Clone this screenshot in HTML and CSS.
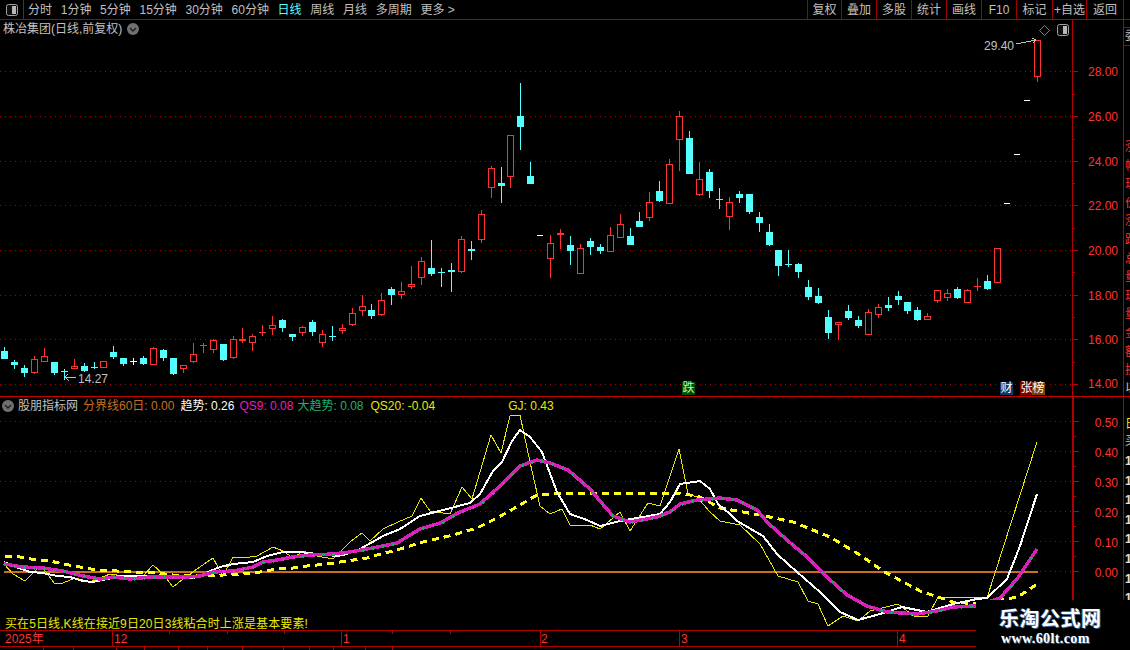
FILE: index.html
```html
<!DOCTYPE html>
<html lang="zh-CN">
<head>
<meta charset="utf-8">
<title>株冶集团 日线</title>
<link rel="stylesheet" href="styles.css">
</head>
<body>
<div class="app">
  <header class="toolbar">
    <div class="layout-cell">
      <svg class="panel-icon" viewBox="0 0 12 12"><rect x="0.5" y="0.5" width="11" height="11" rx="2" class="pi-frame"/><rect x="6" y="2" width="4" height="8" class="pi-fill"/></svg>
    </div>
    <nav class="periods">
      <span>分时</span><span>1分钟</span><span>5分钟</span><span>15分钟</span><span>30分钟</span><span>60分钟</span>
      <span class="active">日线</span><span>周线</span><span>月线</span><span>多周期</span><span>更多 &gt;</span>
    </nav>
    <div class="actions">
      <span class="btn narrow">复权</span><span class="btn">叠加</span><span class="btn">多股</span><span class="btn">统计</span><span class="btn">画线</span><span class="btn">F10</span><span class="btn wide">标记</span><span class="btn narrow">+自选</span><span class="btn widest">返回</span>
    </div>
  </header>

  <section class="pane price">
    <div class="plot">
      <svg class="chart" viewBox="0 20 1072 376" width="1072" height="376">
        <path id="price-grid" class="grid"/>
        <g id="candles"></g>
        <text x="78" y="383" class="note">14.27</text>
        <path d="M76 377H65M65 377l3-3M65 377l4 4" class="note-line"/>
        <text x="984" y="50" class="note">29.40</text>
        <path d="M1016 44l20-4M1036 40l-4-2M1036 40l-3 3" class="note-line"/>
      </svg>
      <div class="title">
        <span>株冶集团(日线,前复权)</span>
        <svg class="chev" viewBox="0 0 12 12"><circle cx="6" cy="6" r="6" class="chev-bg"/><path d="M3 5l3 3 3-3" class="chev-mark"/></svg>
      </div>
      <div class="corner-tools">
        <svg class="diamond" viewBox="0 0 11 11"><path d="M5.5 0.5l5 5-5 5-5-5z" class="diamond-line"/></svg>
        <svg class="panel-icon" viewBox="0 0 12 12"><rect x="0.5" y="0.5" width="11" height="11" rx="2" class="pi-frame"/><rect x="6" y="2" width="4" height="8" class="pi-fill"/></svg>
      </div>
      <span class="mark mark-die">跌</span>
      <span class="mark mark-cai">财</span>
      <span class="mark mark-zhang">张</span>
      <span class="mark mark-bang">榜</span>
    </div>
    <svg class="axis" viewBox="1073 20 50 376" width="50" height="376">
      <path class="tick" d="M1073 71.5h5M1073 116.5h5M1073 161.5h5M1073 205.5h5M1073 250.5h5M1073 295.5h5M1073 339.5h5M1073 384.5h5M1073 94.5h2M1073 139.5h2M1073 183.5h2M1073 228.5h2M1073 272.5h2M1073 317.5h2M1073 362.5h2"/>
      <text x="1118" y="76">28.00</text><text x="1118" y="121">26.00</text><text x="1118" y="166">24.00</text><text x="1118" y="210">22.00</text><text x="1118" y="255">20.00</text><text x="1118" y="300">18.00</text><text x="1118" y="344">16.00</text><text x="1118" y="388">14.00</text>
    </svg>
    <div class="strip">
      <span class="frag boxed">委</span>
      <span class="frag reds">涨<br>幅<br>现<br>价<br>涨<br>跌<br>总<br>量<br>现<br>量<br>金<br>额<br>换</span>
      <span class="frag tail">以</span>
    </div>
  </section>

  <section class="pane indicator">
    <div class="plot">
      <svg class="chart" viewBox="0 398 1072 232" width="1072" height="232">
        <path id="ind-grid" class="grid"/>
        <line x1="4" y1="572.5" x2="1038" y2="572.5" class="zero"/>
        <polyline id="gj" class="ln-thin"/>
        <polyline id="qs20" class="ln-dash"/>
        <polyline id="trend" class="ln-white"/>
        <polyline id="qs9" class="ln-mag"/>
        <g id="qs9-marks"></g>
      </svg>
      <div class="legend">
        <svg class="chev" viewBox="0 0 12 12"><circle cx="6" cy="6" r="6" class="chev-bg"/><path d="M3 5l3 3 3-3" class="chev-mark"/></svg>
        <span class="lg-name">股朋指标网</span>
        <span class="lg-orange">分界线60日: 0.00</span>
        <span class="lg-white">趋势: 0.26</span>
        <span class="lg-mag">QS9: 0.08</span>
        <span class="lg-green">大趋势: 0.08</span>
        <span class="lg-yellow lg-qs20">QS20: -0.04</span>
        <span class="lg-yellow lg-gj">GJ: 0.43</span>
      </div>
      <p class="tip">买在5日线,K线在接近9日20日3线粘合时上涨是基本要素!</p>
    </div>
    <svg class="axis axis-strong" viewBox="1074 398 49 232" width="49" height="232">
      <path class="tick" d="M1074 422.5h5M1074 452.5h5M1074 482.5h5M1074 512.5h5M1074 542.5h5M1074 572.5h5M1074 437.5h2M1074 467.5h2M1074 497.5h2M1074 527.5h2M1074 557.5h2"/>
      <text x="1118" y="428">0.50</text><text x="1118" y="458">0.40</text><text x="1118" y="488">0.30</text><text x="1118" y="518">0.20</text><text x="1118" y="548">0.10</text><text x="1118" y="578">0.00</text>
    </svg>
    <div class="strip">
      <span class="frag box-yellow">日</span>
      <span class="frag tail">买</span>
      <span class="frag digits">1<br>1<br>1<br>1<br>1<br>1<br>1<br>1</span>
    </div>
  </section>

  <footer class="timebar">
    <svg class="dates" viewBox="0 630 1130 20" width="1130" height="20">
      <path class="time-line" d="M0 630.5H1123M0 646.5H1123M112.5 631v15M341.5 631v15M540.5 631v15M679.5 631v15M897.5 631v15M169.5 631v3M227.5 631v3M284.5 631v3M392.5 631v3M450.5 631v3M43.5 647v3M73.5 647v3M116.5 647v3M144.5 647v3M178.5 647v3M207.5 647v3M242.5 647v3M283.5 647v3M309.5 647v3M333.5 647v3M365.5 647v3M392.5 647v3"/>
      <text x="5" y="643">2025年</text><text x="114" y="643">12</text><text x="343" y="643">1</text><text x="541" y="643">2</text><text x="681" y="643">3</text><text x="899" y="643">4</text>
    </svg>
  </footer>

  <aside class="watermark">
    <div class="wm-cn">乐淘公式网</div>
    <div class="wm-url">www.60lt.com</div>
  </aside>
</div>
<script src="script.js"></script>
</body>
</html>
```

FILE: styles.css
```css
* { box-sizing: border-box; }
html, body { margin: 0; padding: 0; background: #000; }
body { font: 12px/1 "Liberation Sans", "Noto Sans CJK SC", sans-serif; color: #c0c0c0; }
.app { position: relative; width: 1130px; height: 650px; overflow: hidden; background: #000; display: flex; flex-direction: column; }

/* toolbar */
.toolbar { display: flex; height: 20px; flex: none; border-bottom: 1px solid #b00000; align-items: stretch; }
.layout-cell { width: 24px; border-right: 1px solid #c00000; display: flex; align-items: center; justify-content: center; padding-right: 0; }
.panel-icon { width: 12px; height: 12px; display: block; }
.pi-frame { fill: #101010; stroke: #a0a0a0; }
.pi-fill { fill: #b8b8b8; }
.periods { display: flex; align-items: center; gap: 8.7px; padding-left: 4px; white-space: nowrap; }
.periods .active { color: #54ffff; }
.actions { display: flex; margin-left: auto; margin-right: 6px; border-right: 1px solid #a00000; }
.btn { width: 35px; border-left: 1px solid #a00000; display: flex; align-items: center; justify-content: center; white-space: nowrap; }
.btn.narrow { width: 34px; }
.btn.wide { width: 36px; }
.btn.widest { width: 37px; }

/* panes */
.pane { display: flex; flex: none; }
.price { height: 377px; border-bottom: 1px solid #c80000; }
.indicator { height: 233px; border-bottom: 0; }
.plot { position: relative; width: 1072px; flex: none; }
.chart { display: block; shape-rendering: crispEdges; }
.axis { display: block; flex: none; border-left: 1px solid #b00000; width: 51px; box-sizing: border-box; }
.axis-strong { border-left: 2px solid #b00000; }
.axis text, .dates text { fill: #ff3232; font-size: 12px; }
.axis text { text-anchor: end; }
.tick { stroke: #c00000; fill: none; shape-rendering: crispEdges; }
.strip { width: 7px; flex: none; border-left: 1px solid #b00000; overflow: hidden; display: flex; flex-direction: column; }

/* right-hand clipped fragments */
.frag { display: block; width: 12px; padding-left: 1px; white-space: nowrap; }
.boxed { margin-top: 7px; height: 19px; line-height: 17px; color: #c0c0c0; border-top: 1px solid #b00000; border-bottom: 1px solid #b00000; }
.reds { margin-top: 92px; color: #ff3232; line-height: 18.6px; }
.tail { color: #c0c0c0; line-height: 16px; }
.box-yellow { margin-top: 18px; color: #e8e800; line-height: 18px; }
.digits { margin-top: 3px; color: #e0e0e0; font-weight: bold; line-height: 19.6px; }

/* price overlays */
.title { position: absolute; left: 3px; top: 2px; height: 14px; display: flex; align-items: center; gap: 5px; }
.chev { width: 12px; height: 12px; flex: none; display: block; }
.chev-bg { fill: #707070; }
.chev-mark { fill: none; stroke: #1c1c1c; stroke-width: 1.4; }
.corner-tools { position: absolute; left: 1039px; top: 4px; display: flex; gap: 7px; align-items: center; }
.diamond { width: 11px; height: 11px; display: block; }
.diamond-line { fill: none; stroke: #808080; }
.note { fill: #c0c0c0; font-size: 12px; }
.note-line { fill: none; stroke: #c0c0c0; }

.mark { position: absolute; top: 362px; width: 13px; height: 13px; line-height: 13px; text-align: center; color: #fff; }
.mark-die { left: 682px; background: #005000; color: #b0ffb0; }
.mark-cai { left: 1000px; background: #0a3a70; }
.mark-zhang { left: 1020px; background: #800000; }
.mark-bang { left: 1032px; background: #804000; }

/* chart primitives */
.grid { fill: none; stroke: #b00000; stroke-width: 1; }
.wick-red, .solid-red { fill: #ff3232; }
.wick-cyan, .solid-cyan { fill: #54ffff; }
.solid-white { fill: #fff; }
.hollow-red { fill: #000; stroke: #ff3232; }
.zero { stroke: #c87020; stroke-width: 2; }
.ln-thin { fill: none; stroke: #e8e800; stroke-width: 1; }
.ln-dash { fill: none; stroke: #ffff20; stroke-width: 3; stroke-dasharray: 7 5; }
.ln-white { fill: none; stroke: #fff; stroke-width: 2; }
.ln-mag { fill: none; stroke: #d820b8; stroke-width: 3.5; }
.mk { fill: #20a870; }

/* indicator overlays */
.legend { position: absolute; left: 2px; top: 2px; display: flex; align-items: center; height: 14px; gap: 5px; white-space: nowrap; }
.lg-name { color: #c0c0c0; margin-left: -1px; }
.lg-orange { color: #c87020; }
.lg-white { color: #fff; margin-left: 1px; }
.lg-mag { color: #e020c0; }
.lg-green { color: #20b070; margin-left: -1px; }
.lg-yellow { color: #e8e800; }
.lg-qs20 { margin-left: 2px; }
.lg-gj { margin-left: 68px; }
.tip { position: absolute; left: 5px; top: 221px; margin: 0; color: #e8e800; white-space: nowrap; letter-spacing: 0.1px; }

/* time axis */
.timebar { flex: none; height: 20px; }
.dates { display: block; shape-rendering: crispEdges; }
.time-line { stroke: #b00000; fill: none; }

/* watermark lying over the chart's bottom-right corner */
.watermark { position: absolute; left: 976px; top: 600px; width: 154px; height: 50px; background: #000; display: flex; flex-direction: column; align-items: flex-start; padding: 7px 0 0 23px; }
.wm-cn { font: bold 20px/22px "Noto Sans CJK SC", sans-serif; letter-spacing: 0.5px; color: #fff; text-shadow: 1px 1px 0 #2f5f9a, -1px 0 0 #244a78; }
.wm-url { font: bold 14px/15px "Liberation Serif", serif; letter-spacing: 0.4px; color: #fff; text-shadow: 1px 1px 0 #2f5f9a; margin: 2px 0 0 2px; }
```

FILE: script.js
```js
// [x, colour, wickTop, bodyTop, bodyBottom, wickBottom]; colour: r hollow red, R solid red, c cyan, w white
var candles = [
[4,'c',347,351,359,359],[14,'c',360,362,365,369],[24,'c',365,368,373,377],[34,'r',356,359,373,374],[44,'r',348,356,362,362],
[54,'c',362,362,373,375],[64,'c',369,371,372,380],[74,'r',359,366,369,369],[84,'c',363,366,371,372],[94,'c',362,367,367,369],
[103,'r',361,361,368,368],[113,'c',346,352,357,359],[123,'c',358,358,364,366],[133,'w',358,361,362,365],[143,'c',356,358,364,365],
[153,'r',347,348,365,365],[163,'c',349,350,358,361],[173,'c',358,358,374,375],[183,'r',365,365,369,373],[193,'r',343,354,362,363],
[203,'R',343,345,346,353],[213,'r',339,340,350,353],[223,'c',344,344,360,361],[233,'r',336,339,358,359],[242,'r',328,339,341,343],
[252,'r',334,336,343,351],[262,'R',325,332,333,336],[272,'r',316,325,329,335],[282,'c',319,320,328,332],[292,'c',334,334,337,341],
[302,'r',326,327,333,336],[312,'c',320,322,332,336],[322,'r',330,334,343,347],[332,'c',326,336,336,341],[342,'r',324,328,331,334],
[352,'r',308,313,325,326],[362,'r',295,306,311,316],[371,'c',304,310,316,319],[381,'r',293,300,315,316],[391,'c',287,289,295,305],
[401,'r',282,291,295,299],[411,'r',266,284,287,289],[421,'r',257,261,278,285],[431,'c',240,268,274,276],[441,'c',268,272,273,287],
[451,'c',263,270,272,292],[461,'r',236,239,272,273],[471,'c',241,249,251,260],[481,'r',210,214,240,243],[491,'r',166,168,188,198],
[501,'c',167,183,186,203],[510,'r',135,135,177,188],[520,'c',83,116,127,150],[530,'c',162,176,184,184],
[550,'r',235,243,259,278],[560,'R',229,233,235,249],[570,'c',236,245,251,265],[580,'r',244,248,274,274],[590,'c',238,241,247,255],
[600,'c',244,247,251,254],[610,'r',227,235,252,252],[620,'r',214,224,238,238],[630,'c',228,236,245,245],[639,'c',212,221,227,227],
[649,'r',192,202,218,221],[659,'c',181,191,201,202],[669,'r',159,164,204,204],[679,'r',111,116,140,171],[689,'c',131,138,174,174],
[699,'r',162,179,195,196],[709,'c',169,172,191,198],[719,'c',188,199,200,209],[729,'r',197,202,217,230],[739,'c',191,194,198,203],
[749,'c',194,194,212,214],[759,'c',212,217,223,232],[769,'c',224,232,245,246],[778,'c',250,250,266,276],[788,'c',250,264,265,267],
[798,'c',263,264,272,278],[808,'c',280,287,297,300],[818,'c',288,296,303,304],[828,'c',310,317,333,339],[838,'r',322,322,325,340],
[848,'c',305,311,318,320],[858,'c',316,320,326,328],[868,'r',309,312,335,335],[878,'r',304,307,315,318],[888,'c',297,305,308,311],
[898,'c',291,296,300,305],[907,'c',302,302,311,314],[917,'c',307,310,320,321],[927,'r',313,316,320,320],[937,'r',290,290,301,303],
[947,'r',289,293,298,301],[957,'c',287,289,298,299],[967,'r',289,290,303,303],[977,'R',278,286,287,291],[987,'c',275,281,289,290],
[997,'r',248,248,283,283],[1037,'r',40,40,77,82]
];
var dashes = [[537,235],[1004,203],[1014,154],[1024,100]];

var magenta = [[4,565],[23,568],[43,569],[63,572],[83,577],[100,580],[113,578],[130,580],[150,578],[173,578],[187,578],[200,577],[213,573],[233,572],[253,568],[263,563],[277,561],[293,558],[310,556],[333,555],[350,553],[367,550],[383,547],[397,544],[410,536],[420,530],[440,524],[460,513],[480,505],[500,487],[520,467],[537,461],[550,464],[568,471],[590,490],[600,502],[613,517],[630,523],[657,518],[670,513],[680,505],[697,501],[720,499],[737,501],[757,511],[768,524],[787,541],[807,558],[827,578],[847,596],[867,607],[887,613],[917,615],[937,612],[953,608],[975,607],[1000,599],[1017,580],[1037,550]];
var white = [[4,563],[13,567],[30,573],[43,574],[57,577],[70,578],[83,582],[93,583],[107,580],[123,577],[140,577],[157,577],[173,578],[190,579],[200,578],[210,572],[220,568],[233,565],[253,563],[267,557],[283,553],[300,553],[317,555],[337,557],[347,555],[360,550],[383,537],[400,530],[420,517],[447,510],[470,504],[480,495],[493,472],[502,463],[512,442],[520,431],[530,438],[542,453],[557,493],[570,515],[587,521],[600,527],[620,522],[643,518],[660,515],[670,503],[680,485],[700,482],[710,490],[718,505],[730,515],[737,522],[763,537],[777,555],[797,573],[820,593],[840,613],[858,621],[880,615],[902,608],[927,613],[953,605],[977,600],[987,599],[1007,580],[1020,547],[1037,495]];
var thin = [[4,565],[13,575],[25,582],[37,570],[43,569],[55,585],[63,584],[75,579],[90,583],[110,575],[123,577],[143,577],[153,566],[163,575],[173,588],[183,580],[197,570],[207,563],[213,559],[223,577],[233,558],[243,559],[257,557],[273,548],[283,552],[293,559],[303,552],[317,557],[333,560],[350,543],[362,534],[370,542],[383,530],[398,523],[412,517],[421,499],[430,512],[450,515],[462,488],[472,500],[491,436],[501,454],[510,417],[520,416],[530,463],[540,507],[550,515],[562,510],[570,526],[590,526],[600,530],[620,513],[630,532],[648,504],[660,507],[679,450],[688,495],[697,498],[710,513],[720,522],[740,526],[760,545],[778,577],[798,583],[808,602],[818,605],[828,627],[843,617],[858,622],[870,612],[898,605],[915,618],[928,617],[938,598],[977,598],[987,599],[1037,443]];
var dash = [[5,557],[20,558],[37,561],[50,562],[63,565],[80,568],[97,571],[117,572],[133,573],[150,573],[173,576],[200,577],[223,576],[240,575],[260,573],[277,570],[293,569],[307,567],[327,565],[347,562],[367,559],[377,556],[397,551],[423,543],[453,536],[477,529],[497,519],[520,506],[537,496],[567,494],[613,494],[680,494],[700,498],[720,509],[760,516],[793,523],[830,538],[860,556],[883,572],[920,592],[953,603],[977,605],[1018,598],[1037,585]];

function pts(a) { return a.map(function (p) { return p.join(','); }).join(' '); }
function rect(cls, x, y, w, h) { return '<rect class="' + cls + '" x="' + x + '" y="' + y + '" width="' + w + '" height="' + h + '"/>'; }
function dotted(ys, from) {
  var d = '';
  ys.forEach(function (y) {
    for (var x = from; x < 1072; x += 5) { d += 'M' + x + ' ' + (y + 0.5) + 'h1'; }
  });
  return d;
}

document.getElementById('price-grid').setAttribute('d', dotted([71, 116, 161, 205, 250, 295, 339, 384], 0));
document.getElementById('ind-grid').setAttribute('d', dotted([422, 452, 482, 512, 542], 0) + dotted([572], 1040));

var out = '';
candles.forEach(function (c) {
  var x = c[0], k = c[1], wt = c[2], bt = c[3], bb = c[4], wb = c[5];
  var tone = (k === 'c') ? 'cyan' : 'red';
  var w = (k === 'w') ? 'solid-white' : 'wick-' + tone;
  out += rect(w, x, wt, 1, wb - wt);
  if (k === 'r') {
    out += rect('hollow-red', x - 2.5, bt + 0.5, 6, Math.max(bb - bt - 1, 1));
  } else {
    out += rect(k === 'c' ? 'solid-cyan' : (k === 'w' ? 'solid-white' : 'solid-red'), x - 3, bt, 7, Math.max(bb - bt, 1));
  }
});
dashes.forEach(function (d) { out += rect('solid-white', d[0], d[1], 6, 1); });
document.getElementById('candles').innerHTML = out;

document.getElementById('gj').setAttribute('points', pts(thin));
document.getElementById('qs20').setAttribute('points', pts(dash));
document.getElementById('trend').setAttribute('points', pts(white));
document.getElementById('qs9').setAttribute('points', pts(magenta));

function yAt(a, x) {
  for (var i = 1; i < a.length; i++) {
    if (x <= a[i][0]) {
      var t = (x - a[i - 1][0]) / (a[i][0] - a[i - 1][0]);
      return a[i - 1][1] + t * (a[i][1] - a[i - 1][1]);
    }
  }
  return a[a.length - 1][1];
}
var marks = '';
for (var mx = 4; mx <= 1037; mx += 9.97) {
  var px = Math.round(mx), py = Math.round(yAt(magenta, mx));
  marks += rect('mk', px - 1, py, 3, 1) + rect('mk', px, py - 1, 1, 3);
}
document.getElementById('qs9-marks').innerHTML = marks;
```
